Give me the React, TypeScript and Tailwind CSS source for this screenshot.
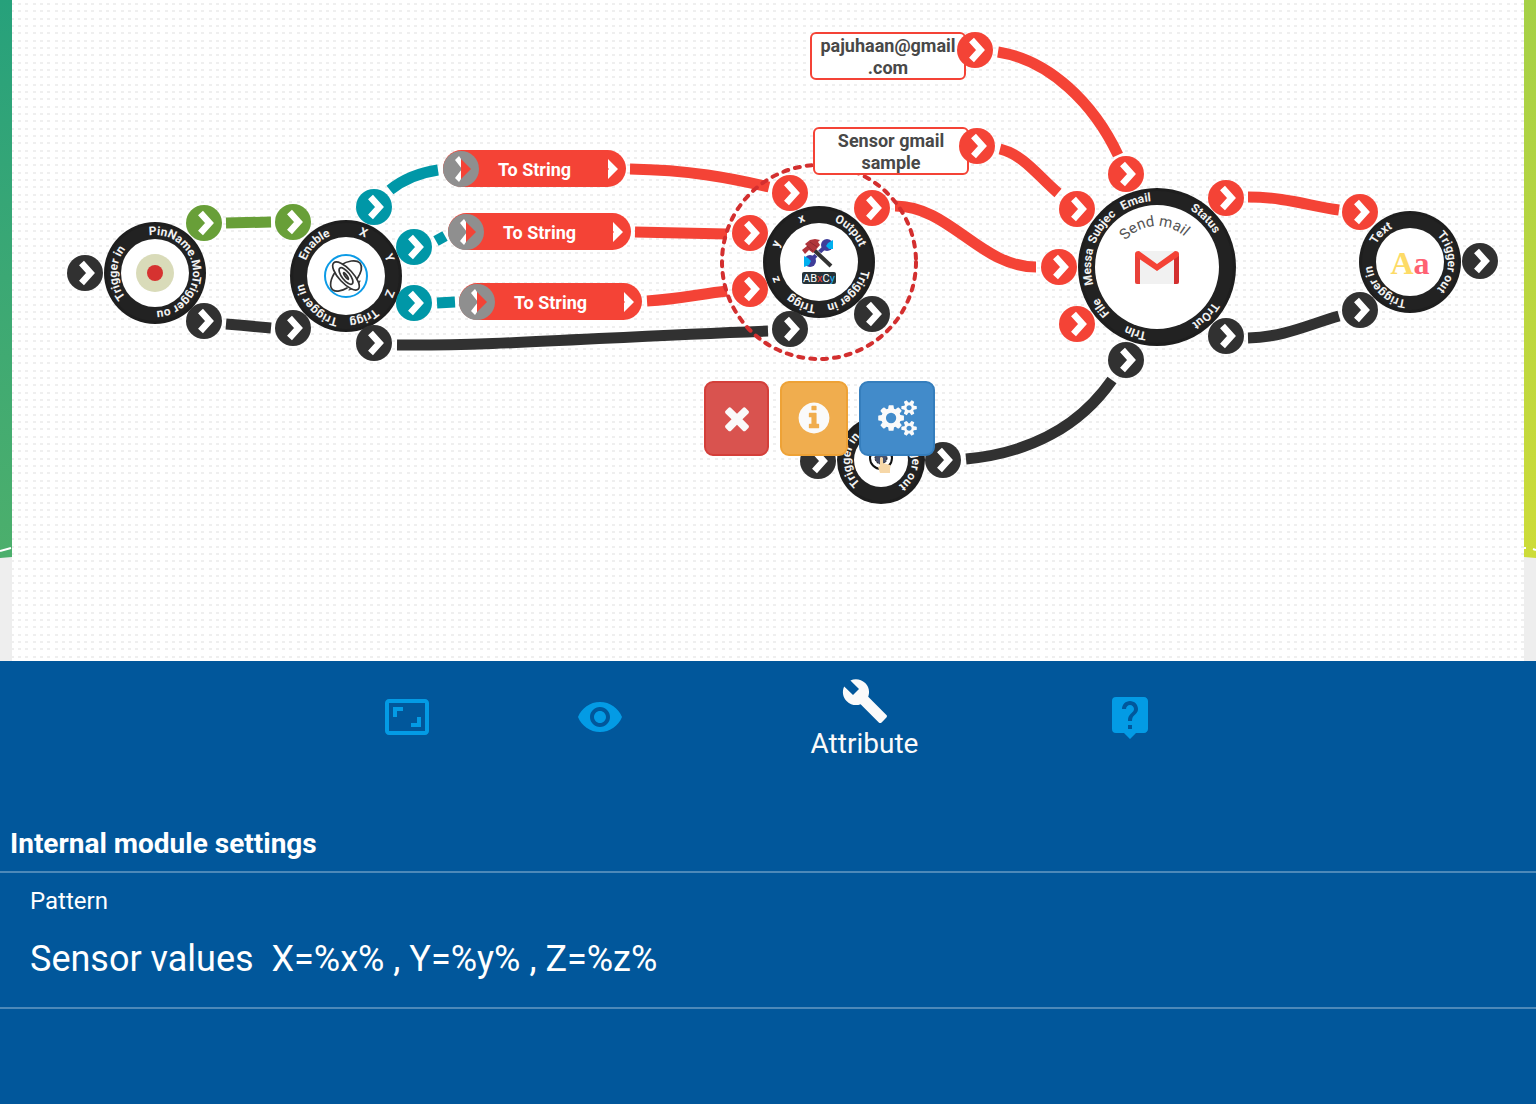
import { useState, type ReactNode } from "react";
import { MdAspectRatio, MdBuild, MdLiveHelp, MdVisibility } from "react-icons/md";

type Tone = "red" | "dark" | "teal" | "green";

const portTone: Record<Tone, string> = {
  red: "bg-[#f44336]",
  dark: "bg-[#313131]",
  teal: "bg-[#0097a7]",
  green: "bg-[#689f38]",
};

const wireTone: Record<Tone, string> = {
  red: "stroke-[#f44336]",
  dark: "stroke-[#313131]",
  teal: "stroke-[#0097a7]",
  green: "stroke-[#689f38]",
};

const wires: { d: string; tone: Tone }[] = [
  { d: "M226 223 L271 222", tone: "green" },
  { d: "M226 324 Q250 326 271 328", tone: "dark" },
  { d: "M390 190 Q410 174 438 170", tone: "teal" },
  { d: "M436 241 L445 236", tone: "teal" },
  { d: "M437 303 L455 302", tone: "teal" },
  { d: "M397 345 C500 346 600 337 768 331", tone: "dark" },
  { d: "M630 169 C690 170 730 178 769 187", tone: "red" },
  { d: "M635 232 L727 234", tone: "red" },
  { d: "M647 301 C680 299 700 294 727 291", tone: "red" },
  { d: "M895 206 C950 206 980 267 1036 267", tone: "red" },
  { d: "M998 52 C1050 60 1094 104 1118 155", tone: "red" },
  { d: "M1000 149 C1024 155 1038 176 1058 193", tone: "red" },
  { d: "M1248 197 C1285 197 1310 206 1339 210", tone: "red" },
  { d: "M1248 338 C1285 337 1310 324 1339 316", tone: "dark" },
  { d: "M966 459 C1030 453 1080 426 1112 380", tone: "dark" },
];

function Port({ x, y, tone, label }: { x: number; y: number; tone: Tone; label: string }) {
  return (
    <button
      type="button"
      aria-label={label}
      className={`absolute size-9 -translate-x-1/2 -translate-y-1/2 rounded-full ${portTone[tone]}`}
      style={{ left: x, top: y }}
    >
      <svg viewBox="-18 -18 36 36" className="block size-9">
        <path d="M-3.5 -10 L5.5 0 L-3.5 10" fill="none" stroke="#fff" strokeWidth="6.6" />
      </svg>
    </button>
  );
}

type NodeLabel = { text: string; angle: number };

function RingNode({
  id,
  x,
  y,
  outer,
  labels,
  children,
}: {
  id: string;
  x: number;
  y: number;
  outer: number;
  labels: NodeLabel[];
  children: ReactNode;
}) {
  const inner = outer - 17;
  const base = outer - 13;
  return (
    <div className="absolute -translate-x-1/2 -translate-y-1/2" style={{ left: x, top: y }}>
      <svg
        width={outer * 2}
        height={outer * 2}
        viewBox={`${-outer} ${-outer} ${outer * 2} ${outer * 2}`}
        className="block overflow-visible"
      >
        <defs>
          <path id={`ring-${id}`} d={`M0 ${base} A${base} ${base} 0 0 1 0 ${-base} A${base} ${base} 0 0 1 0 ${base}`} />
        </defs>
        <circle r={outer} fill="#1e1e1e" />
        <circle r={outer - 3} fill="#222" />
        <circle r={inner} fill="#fff" />
        {labels.map((l) => (
          <text
            key={l.text}
            transform={`rotate(${l.angle})`}
            textAnchor="middle"
            className="fill-[#f2f2f2] font-[Roboto,sans-serif] text-[12px] font-bold"
          >
            <textPath href={`#ring-${id}`} startOffset="50%">
              {l.text}
            </textPath>
          </text>
        ))}
        {children}
      </svg>
    </div>
  );
}

function Converter({ x, y }: { x: number; y: number }) {
  return (
    <div
      className="absolute flex h-[37px] w-[183px] items-center rounded-full bg-[#f44336] text-white"
      style={{ left: x, top: y }}
    >
      <svg viewBox="-18 -18 36 36" className="size-9 shrink-0">
        <circle r="18" fill="#8f8f8f" />
        <path d="M0 -10 L-2 -13 L-6 -9 L1 0 L-6 9 L-2 13 L0 10 Z" fill="#fff" />
        <path d="M-6 -5 L0 0 L-6 5 Z" fill="#8f8f8f" />
        <path d="M0 -10 L10 0 L0 10 Z" fill="#f44336" />
      </svg>
      <span className="flex-1 pt-0.5 text-center text-[18px] leading-[22px] font-bold">To String</span>
      <svg viewBox="-18 -18 36 36" className="size-9 shrink-0">
        <path d="M0 -10 L10 0 L0 10 V1 L1 0 L0 -1 Z" fill="#fff" />
      </svg>
    </div>
  );
}

function TextCard({ x, y, children }: { x: number; y: number; children: ReactNode }) {
  return (
    <div
      className="absolute flex h-12 w-[156px] items-center justify-center rounded-md border-2 border-[#f44336] bg-white pt-0.5 text-center text-[18px] leading-[22px] font-bold whitespace-nowrap text-[#484848]"
      style={{ left: x, top: y }}
    >
      <span>{children}</span>
    </div>
  );
}

function OrbitIcon() {
  return (
    <g fill="none" stroke="#333" strokeWidth="1.7" strokeLinecap="round">
      <circle r="21" stroke="#0c9be6" strokeWidth="2" fill="#fff" />
      <path d="M-5 -11 C1 -15 10 -17 14 -13 C17 -9 15 -3 11 3" />
      <path d="M-10 -5 C-16 3 -17 11 -13 14 C-10 16 -4 15 1 12" />
      <path d="M14 5 C12 9 7 13 3 14" strokeWidth="1.2" />
      <ellipse rx="18" ry="7" transform="rotate(47)" fill="#fff" />
      <ellipse rx="10" ry="4" transform="rotate(52)" />
      <ellipse rx="4" ry="1" transform="rotate(55)" />
    </g>
  );
}

function ToolsIcon() {
  return (
    <g>
      <path d="M-8 -2 L7 -16" stroke="#3f3d99" strokeWidth="4" />
      <circle cx="8" cy="-17" r="6" fill="#3f3d99" />
      <path d="M14 -22 L9 -19 L7 -16 L10 -13 L14 -13 Z" fill="#00b0f0" />
      <circle cx="-9" cy="-1" r="6" fill="#3f3d99" />
      <path d="M-15 -6 L-11 -4 L-8 -1 L-10 3 L-15 5 Z" fill="#00b0f0" />
      <path d="M-6 -13 L12 4" stroke="#fff" strokeWidth="5" />
      <path d="M-6 -13 L12 4" stroke="#333" strokeWidth="4" />
      <path d="M-17 -12 L-12 -16 L-14 -18 L-9 -22 L-4 -23 L1 -22 L-1 -20 L1 -17 L-6 -9 L-10 -12 L-14 -8 Z" fill="#b0353b" />
      <path d="M-12 -16 L-6 -11 M-9 -20 L-2 -15" stroke="#8e2a30" strokeWidth="1" />
      <rect x="-17" y="10" width="34" height="12" rx="2" fill="#263238" />
      <text y="20" textAnchor="middle" className="fill-white font-[Roboto,sans-serif] text-[11px]">
        AB<tspan fill="#e53935">x</tspan>C<tspan fill="#1eb4f5">y</tspan>
      </text>
    </g>
  );
}

function MailIcon() {
  return (
    <g>
      <path d="M-22 -13 Q-22 -16 -19 -16 H19 Q22 -16 22 -13 V17 H-22 Z" fill="#f1f1f1" />
      <path d="M-22 -13 L-17 -11 V17 H-20 Q-22 17 -22 15 Z" fill="#e8413a" />
      <path d="M22 -13 L17 -11 V17 H20 Q22 17 22 15 Z" fill="#d32f2f" />
      <path d="M-22 -13 Q-22 -16 -18 -16 L0 -3 L18 -16 Q22 -16 22 -13 L22 -11 L0 4 L-22 -11 Z" fill="#f44336" />
    </g>
  );
}

function TouchIcon() {
  return (
    <g>
      <circle cy="-2" r="11" fill="none" stroke="#111" strokeWidth="2" />
      <circle cy="-2" r="6" fill="#47506b" stroke="#111" strokeWidth="1" strokeDasharray="2 1" />
      <path d="M-1 -2 Q0 -4 2 -2 V3 L9 5 Q10 6 9 9 V13 H-1 L-3 7 L-1 6 Z" fill="#f6d7a7" />
    </g>
  );
}

const timesPath =
  "M1490 1322q0 40-28 68l-136 136q-28 28-68 28t-68-28l-294-294-294 294q-28 28-68 28t-68-28l-136-136q-28-28-28-68t28-68l294-294-294-294q-28-28-28-68t28-68l136-136q28-28 68-28t68 28l294 294 294-294q28-28 68-28t68 28l136 136q28 28 28 68t-28 68l-294 294 294 294q28 28 28 68z";
const infoPath =
  "M1152 1376v-160q0-14-9-23t-23-9h-96v-512q0-14-9-23t-23-9h-320q-14 0-23 9t-9 23v160q0 14 9 23t23 9h96v320h-96q-14 0-23 9t-9 23v160q0 14 9 23t23 9h448q14 0 23-9t9-23zm-128-896v-160q0-14-9-23t-23-9h-192q-14 0-23 9t-9 23v160q0 14 9 23t23 9h192q14 0 23-9t9-23zm640 416q0 209-103 385.5t-279.5 279.5-385.5 103-385.5-103-279.5-279.5-103-385.5 103-385.5 279.5-279.5 385.5-103 385.5 103 279.5 279.5 103 385.5z";
const cogsPath =
  "M896 896q0-106-75-181t-181-75-181 75-75 181 75 181 181 75 181-75 75-181zm768 512q0-52-38-90t-90-38-90 38-38 90q0 53 37.5 90.5t90.5 37.5 90.5-37.5 37.5-90.5zm0-1024q0-52-38-90t-90-38-90 38-38 90q0 53 37.5 90.5t90.5 37.5 90.5-37.5 37.5-90.5zm-384 421v185q0 10-7 19.5t-16 10.5l-155 24q-11 35-32 76 34 48 90 115 7 11 7 20 0 12-7 19-23 30-82.5 89.5t-78.5 59.5q-11 0-21-7l-115-90q-37 19-77 31-11 108-23 155-7 24-30 24h-186q-11 0-20-7.5t-10-17.5l-23-153q-34-10-75-31l-118 89q-7 7-20 7-11 0-21-8-144-133-144-160 0-9 7-19 10-14 41-53t47-61q-23-44-35-82l-152-24q-10-1-17-9.5t-7-19.5v-185q0-10 7-19.5t16-10.5l155-24q11-35 32-76-34-48-90-115-7-11-7-20 0-12 7-20 22-30 82-89t79-59q11 0 21 7l115 90q34-18 77-32 11-108 23-154 7-24 30-24h186q11 0 20 7.5t10 17.5l23 153q34 10 75 31l118-89q8-7 20-7 11 0 21 8 144 133 144 160 0 8-7 19-12 16-42 54t-45 60q23 48 34 82l152 23q10 2 17 10.5t7 19.5zm640 533v140q0 16-149 31-12 27-30 52 51 113 51 138 0 4-4 7-122 71-124 71-8 0-46-47t-52-68q-20 2-30 2t-30-2q-14 21-52 68t-46 47q-2 0-124-71-4-3-4-7 0-25 51-138-18-25-30-52-149-15-149-31v-140q0-16 149-31 13-29 30-52-51-113-51-138 0-4 4-7 4-2 35-20t59-34 30-16q8 0 46 46.5t52 67.5q20-2 30-2t30 2q51-71 92-112l6-2q4 0 124 70 4 3 4 7 0 25-51 138 17 23 30 52 149 15 149 31zm0-1024v140q0 16-149 31-12 27-30 52 51 113 51 138 0 4-4 7-122 71-124 71-8 0-46-47t-52-68q-20 2-30 2t-30-2q-14 21-52 68t-46 47q-2 0-124-71-4-3-4-7 0-25 51-138-18-25-30-52-149-15-149-31v-140q0-16 149-31 13-29 30-52-51-113-51-138 0-4 4-7 4-2 35-20t59-34 30-16q8 0 46 46.5t52 67.5q20-2 30-2t30 2q51-71 92-112l6-2q4 0 124 70 4 3 4 7 0 25-51 138 17 23 30 52 149 15 149 31z";

const ports: { x: number; y: number; tone: Tone; label: string }[] = [
  { x: 85, y: 273, tone: "dark", label: "Pin trigger in" },
  { x: 204, y: 223, tone: "green", label: "Pin name" },
  { x: 204, y: 321, tone: "dark", label: "Pin trigger out" },
  { x: 293, y: 222, tone: "green", label: "Sensor enable" },
  { x: 293, y: 328, tone: "dark", label: "Sensor trigger in" },
  { x: 374, y: 207, tone: "teal", label: "Sensor X" },
  { x: 414, y: 247, tone: "teal", label: "Sensor Y" },
  { x: 414, y: 303, tone: "teal", label: "Sensor Z" },
  { x: 374, y: 343, tone: "dark", label: "Sensor trigger out" },
  { x: 790, y: 193, tone: "red", label: "Pattern x" },
  { x: 750, y: 233, tone: "red", label: "Pattern y" },
  { x: 750, y: 289, tone: "red", label: "Pattern z" },
  { x: 790, y: 329, tone: "dark", label: "Pattern trigger" },
  { x: 872, y: 208, tone: "red", label: "Pattern output" },
  { x: 872, y: 314, tone: "dark", label: "Pattern trigger in" },
  { x: 1126, y: 174, tone: "red", label: "Mail address" },
  { x: 1077, y: 209, tone: "red", label: "Mail subject" },
  { x: 1059, y: 267, tone: "red", label: "Mail message" },
  { x: 1077, y: 324, tone: "red", label: "Mail file" },
  { x: 1126, y: 360, tone: "dark", label: "Mail trigger in" },
  { x: 1226, y: 198, tone: "red", label: "Mail status" },
  { x: 1226, y: 336, tone: "dark", label: "Mail trigger out" },
  { x: 1360, y: 212, tone: "red", label: "Text value" },
  { x: 1360, y: 310, tone: "dark", label: "Text trigger in" },
  { x: 1480, y: 261, tone: "dark", label: "Text trigger out" },
  { x: 818, y: 461, tone: "dark", label: "Touch trigger in" },
  { x: 943, y: 460, tone: "dark", label: "Touch trigger out" },
];

function Stage() {
  return (
    <section aria-label="Workflow" className="relative flex min-h-[560px] flex-1 overflow-hidden bg-[#eee]">
      <div className="h-[558px] w-3 shrink-0 bg-linear-to-b from-[#26a17b] to-[#4caf6c] [clip-path:polygon(0_0,100%_0,100%_557px,0_558px)]">
        <svg viewBox="0 0 12 558" className="h-[558px] w-3">
          <path d="M0 551 L11 548" stroke="#fff" strokeWidth="2" />
        </svg>
      </div>
      <svg aria-hidden="true" className="h-auto flex-1 self-stretch bg-white">
        <defs>
          <pattern id="dots" x="5" y="1" width="22" height="22" patternUnits="userSpaceOnUse">
            <g fill="#efefef">
              <path d="M1 2h3v2h-3z M8 2h3v2h-3z M16 2h3v2h-3z" />
              <path d="M1 9h3v2h-3z M8 9h3v2h-3z M16 9h3v2h-3z" />
              <path d="M1 17h3v2h-3z M8 17h3v2h-3z M16 17h3v2h-3z" />
            </g>
          </pattern>
        </defs>
        <rect width="100%" height="100%" fill="url(#dots)" />
      </svg>
      <div className="h-[558px] w-3 shrink-0 bg-linear-to-b from-[#a5d046] to-[#cddc39] [clip-path:polygon(0_0,100%_0,100%_558px,0_557px)]">
        <svg viewBox="0 0 12 558" className="h-[558px] w-3">
          <path d="M0 548 H2 M9 549 L12 550" stroke="#fff" strokeWidth="2" />
        </svg>
      </div>

      <div className="absolute inset-0">
        <svg aria-hidden="true" className="absolute inset-0 size-full" fill="none" strokeWidth="11">
          {wires.map((w) => (
            <path key={w.d} d={w.d} className={wireTone[w.tone]} />
          ))}
          <circle cx="819" cy="262" r="97" stroke="#d32f2f" strokeWidth="4" strokeDasharray="5 7" strokeLinecap="round" />
        </svg>

        <RingNode id="pin" x={155} y={273} outer={51} labels={[{ text: "PinName.Mo", angle: 44 }, { text: "Trigger ou", angle: 136 }, { text: "Trigger in", angle: -90 }]}>
          <circle r="19" fill="#d9dbb9" />
          <circle r="8" fill="#d63230" />
        </RingNode>
        <RingNode
          id="sensor"
          x={346}
          y={276}
          outer={56}
          labels={[
            { text: "Enable", angle: -45 },
            { text: "X", angle: 22 },
            { text: "Y", angle: 67 },
            { text: "Z", angle: 112 },
            { text: "Trigg", angle: 157 },
            { text: "Trigger in", angle: -135 },
          ]}
        >
          <OrbitIcon />
        </RingNode>
        <RingNode
          id="pattern"
          x={819}
          y={262}
          outer={56}
          labels={[
            { text: "Output", angle: 45 },
            { text: "Trigger in", angle: 135 },
            { text: "Trigg", angle: -157 },
            { text: "z", angle: -112 },
            { text: "y", angle: -67 },
            { text: "x", angle: -22 },
          ]}
        >
          <ToolsIcon />
        </RingNode>
        <RingNode
          id="mail"
          x={1157}
          y={267}
          outer={79}
          labels={[
            { text: "Email", angle: -18 },
            { text: "Subjec", angle: -54 },
            { text: "Messa", angle: -90 },
            { text: "File", angle: -126 },
            { text: "TrIn", angle: -162 },
            { text: "TrOut", angle: 135 },
            { text: "Status", angle: 45 },
          ]}
        >
          <path id="mail-title" d="M0 41 A41 41 0 0 1 0 -41 A41 41 0 0 1 0 41" fill="none" />
          <text transform="rotate(-4)" textAnchor="middle" className="fill-[#555] font-[Roboto,sans-serif] text-[15px]">
            <textPath href="#mail-title" startOffset="50%">
              Send mail
            </textPath>
          </text>
          <MailIcon />
        </RingNode>
        <RingNode id="text" x={1410} y={262} outer={51} labels={[{ text: "Text", angle: -45 }, { text: "Trigger out", angle: 90 }, { text: "Trigger in", angle: -135 }]}>
          <text y="12" textAnchor="middle" className="fill-[#fddb67] font-['Liberation_Serif',serif] text-[32px] font-bold">
            A<tspan fill="#ff6172">a</tspan>
          </text>
        </RingNode>
        <RingNode id="touch" x={881} y={460} outer={44} labels={[{ text: "Trigger in", angle: -90 }, { text: "Trigger out", angle: 90 }]}>
          <TouchIcon />
        </RingNode>

        <Converter x={443} y={150} />
        <Converter x={448} y={213} />
        <Converter x={459} y={283} />

        <TextCard x={810} y={32}>
          pajuhaan@gmail
          <br />
          .com
        </TextCard>
        <TextCard x={813} y={127}>
          Sensor gmail
          <br />
          sample
        </TextCard>
        <Port x={975} y={50} tone="red" label="Address output" />
        <Port x={977} y={146} tone="red" label="Subject output" />
        {ports.map((p) => (
          <Port key={p.label} {...p} />
        ))}

        <div className="absolute top-[381px] left-[704px] flex gap-[11px] text-[#fafafa]">
          <button type="button" aria-label="Delete" className="flex h-[75px] w-[65px] items-center justify-center rounded-[9px] border-2 border-[#d43f3a] bg-[#d9534f] pb-0.5">
            <svg viewBox="0 0 1792 1792" fill="currentColor" className="size-9">
              <path d={timesPath} />
            </svg>
          </button>
          <button type="button" aria-label="Info" className="flex h-[75px] w-[68px] items-center justify-center rounded-[9px] border-2 border-[#eea236] bg-[#f0ad4e] pb-0.5">
            <svg viewBox="0 0 1792 1792" fill="currentColor" className="size-9">
              <path d={infoPath} />
            </svg>
          </button>
          <button type="button" aria-label="Settings" className="flex h-[75px] w-[76px] items-center justify-center rounded-[9px] border-2 border-[#357ebd] bg-[#428bca] pb-0.5">
            <svg viewBox="0 0 1920 1792" fill="currentColor" className="h-9 w-[39px]">
              <path d={cogsPath} />
            </svg>
          </button>
        </div>
      </div>
    </section>
  );
}

const tabs = [
  { name: "Screen", Icon: MdAspectRatio },
  { name: "View", Icon: MdVisibility },
  { name: "Attribute", Icon: MdBuild },
  { name: "Help", Icon: MdLiveHelp },
];

export default function App() {
  const [active, setActive] = useState("Attribute");
  const [pattern, setPattern] = useState("Sensor values  X=%x% , Y=%y% , Z=%z%");
  return (
    <div className="flex min-h-screen flex-col font-[Roboto,sans-serif]">
      <Stage />
      <section className="bg-[#01579b] pb-[95px] text-white">
        <nav className="flex h-28 justify-center">
          {tabs.map(({ name, Icon }) =>
            name === active ? (
              <button key={name} type="button" className="flex w-[337px] flex-col items-center pt-4 text-[#fafafa]">
                <Icon className="size-12" />
                <span className="text-[28px] leading-[38px]">{name}</span>
              </button>
            ) : (
              <button
                key={name}
                type="button"
                aria-label={name}
                onClick={() => setActive(name)}
                className="flex w-[193px] items-center justify-center text-[#039be5]"
              >
                <Icon className="size-12" />
              </button>
            ),
          )}
        </nav>
        <h2 className="border-b-2 border-[#4d89b9] px-[10px] pt-[53px] pb-[9px] text-[28px] leading-9 font-bold">
          Internal module settings
        </h2>
        <div className="flex flex-col border-b-2 border-[#4d89b9] px-[30px] pt-3 pb-[23px]">
          <label htmlFor="pattern" className="text-2xl">
            Pattern
          </label>
          <input
            id="pattern"
            value={pattern}
            onChange={(e) => setPattern(e.target.value)}
            className="mt-[17px] h-[50px] w-full bg-transparent text-[36px] leading-[50px] whitespace-pre outline-none"
          />
        </div>
      </section>
    </div>
  );
}
